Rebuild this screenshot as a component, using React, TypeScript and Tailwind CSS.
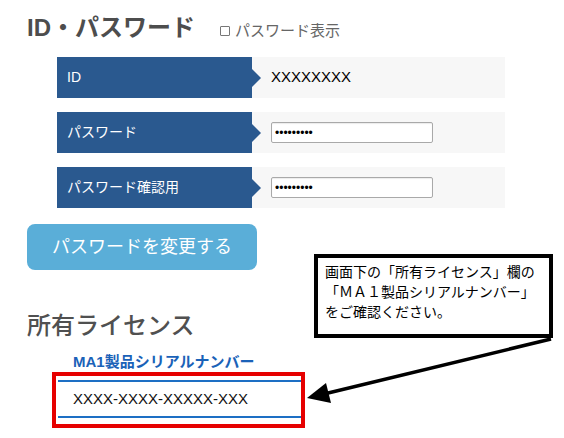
import React from "react";

const rows = [
  { label: "ID", value: "XXXXXXXX", kind: "text" },
  { label: "パスワード", value: "secret123", kind: "password" },
  { label: "パスワード確認用", value: "secret123", kind: "password" },
];

export default function App() {
  return (
    <div
      className="relative w-[564px] h-[438px] bg-white overflow-hidden"
      style={{ fontFamily: '"Liberation Sans", "Noto Sans CJK JP", sans-serif' }}
    >
      <div className="pl-[27px] pt-[10px]">
        {/* header */}
        <div className="flex items-baseline h-[36px]">
          <h1 className="text-[24px] leading-[36px] font-bold text-[#4d4d4d]">ID・パスワード</h1>
          <label className="ml-[25px] flex items-center text-[15px] text-[#666]">
            <span className="inline-block w-[10px] h-[10px] border border-[#777] rounded-[1px] mr-[5px]" />
            パスワード表示
          </label>
        </div>

        {/* rows */}
        <div className="ml-[30px] mt-[11px] w-[448px] flex flex-col gap-[14px]">
          {rows.map((row) => (
            <div key={row.label} className="flex h-[41px] bg-[#f7f7f7]">
              <div className="relative w-[195px] bg-[#2a598f] flex items-center pl-[10px] text-[14px] text-white">
                {row.label}
                <span className="absolute right-[-9px] top-1/2 -translate-y-1/2 w-0 h-0 border-y-[9px] border-y-transparent border-l-[9px] border-l-[#2a598f]" />
              </div>
              <div className="flex items-center pl-[19px]">
                {row.kind === "text" ? (
                  <span className="text-[15px] text-black">{row.value}</span>
                ) : (
                  <input
                    type="password"
                    readOnly
                    defaultValue={row.value}
                    className="w-[162px] h-[21px] border border-[#a9a9a9] rounded-[2px] bg-white px-[3px] text-[12px] outline-none shadow-[inset_0_1px_1px_rgba(0,0,0,0.08)]"
                  />
                )}
              </div>
            </div>
          ))}
        </div>

        {/* button */}
        <button className="mt-[16px] w-[230px] h-[46px] rounded-[8px] bg-[#5aaed8] text-white text-[18px]">
          パスワードを変更する
        </button>

        {/* license */}
        <h2 className="mt-[38px] text-[24px] leading-[36px] font-medium text-[#505050]">所有ライセンス</h2>
        <div className="mt-[8px] ml-[46px] text-[15px] leading-[20px] font-bold text-[#1a62b8]">MA1製品シリアルナンバー</div>
        <div className="ml-[25px] w-[253px] h-[56px] border-[4px] border-[#e60000] pt-[4px] pl-[2px]">
          <div className="border-y-2 border-[#1d6fc4] h-[38px] flex items-center pl-[15px] text-[15px] text-[#111]">
            XXXX-XXXX-XXXXX-XXX
          </div>
        </div>
      </div>

      {/* callout */}
      <div className="absolute left-[314px] top-[254px] w-[239px] h-[84px] border-[4px] border-black bg-white pl-[7px] pt-[4px] text-[14px] leading-[20px] text-black">
        <p>画面下の「所有ライセンス」欄の</p>
        <p>「ＭＡ１製品シリアルナンバー」</p>
        <p>をご確認ください。</p>
      </div>

      <svg className="absolute inset-0 pointer-events-none" width="564" height="438" viewBox="0 0 564 438">
        <line x1="551" y1="339" x2="324" y2="394" stroke="#000" strokeWidth="3.5" />
        <polygon points="307,398 326,383 331,403" fill="#000" />
      </svg>
    </div>
  );
}
